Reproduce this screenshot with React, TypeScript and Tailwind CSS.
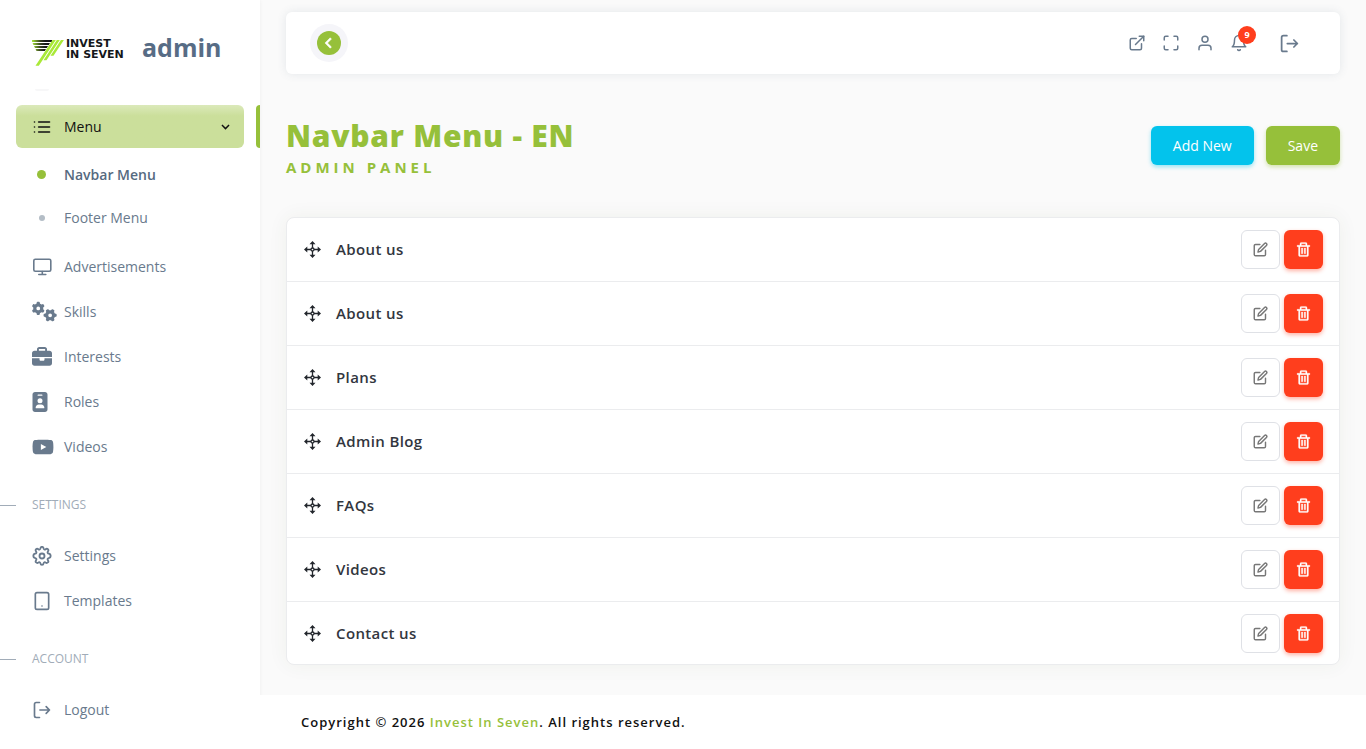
import React, { useState } from 'react';
import { FiBell, FiEdit, FiExternalLink, FiList, FiMaximize, FiTablet, FiUser } from 'react-icons/fi';
import { FaBriefcase, FaGears, FaIdBadge, FaYoutube } from 'react-icons/fa6';
import { BiChevronDown, BiChevronLeft, BiTrash } from 'react-icons/bi';

type MenuItem = { id: number; title: string };

const initialItems: MenuItem[] = [
  { id: 1, title: 'About us' },
  { id: 2, title: 'About us' },
  { id: 3, title: 'Plans' },
  { id: 4, title: 'Admin Blog' },
  { id: 5, title: 'FAQs' },
  { id: 6, title: 'Videos' },
  { id: 7, title: 'Contact us' },
];

function LogoutIcon({ size = 21 }: { size?: number }) {
  return (
    <svg width={size} height={size} viewBox="0 0 24 24" fill="none" stroke="currentColor" strokeWidth="2" strokeLinecap="round" strokeLinejoin="round">
      <path d="M9 21H5a2 2 0 0 1-2-2V5a2 2 0 0 1 2-2h4" />
      <path d="M17 8l4 4-4 4M9.500 12H21" />
    </svg>
  );
}

function MonitorIcon() {
  return (
    <svg width="20" height="20" viewBox="0 0 20 20" fill="none" stroke="currentColor" strokeWidth="1.600" strokeLinecap="round">
      <rect x="1.800" y="2.200" width="17" height="12" rx="1.500" />
      <path d="M10.300 14.500v2.500M6.800 17.500h7" />
    </svg>
  );
}

function GearIcon() {
  return (
    <svg width="20" height="20" viewBox="0 0 24 24" fill="none" stroke="currentColor" strokeWidth="2.200" strokeLinejoin="round">
      <path d="M10.100 2.900c.3-2.500 3.500-2.500 3.800 0 .2 1.300 1.400 1.800 2.400 1 2.100-1.600 4.300.6 2.800 2.700-.8 1.100-.3 2.300 1 2.500 3 .4 3 5 0 5.400-1.300.2-1.800 1.400-1 2.500 1.500 2.100-.7 4.300-2.800 2.800-1-.8-2.200-.3-2.400 1-.3 2.500-3.500 2.500-3.800 0-.2-1.300-1.400-1.800-2.400-1-2.100 1.500-4.300-.7-2.800-2.800.8-1.100.3-2.300-1-2.500-3-.4-3-5 0-5.400 1.300-.2 1.800-1.400 1-2.500-1.500-2.100.7-4.300 2.800-2.700 1 .8 2.200.3 2.400-1z" />
      <circle cx="12" cy="12" r="3" />
    </svg>
  );
}

function MoveIcon() {
  return (
    <svg width="17" height="17" viewBox="0 0 17 17" fill="none" stroke="currentColor" strokeWidth="1.300">
      <circle cx="8.500" cy="8.500" r="1.500" />
      <path d="M8.500 2v5M8.500 10v5M2 8.500h5M10 8.500h5" />
      <path d="M8.500 0l3 3.300h-6zM8.500 17l3-3.300h-6zM0 8.500l3.300-3v6zM17 8.500l-3.300-3v6z" fill="currentColor" stroke="none" />
    </svg>
  );
}

function Logo() {
  return (
    <a href="#" className="flex items-center">
      <svg width="32" height="26" viewBox="0 0 32 26" className="mt-3">
        <defs>
          <linearGradient id="stripe" x1="0" x2="22" y1="0" y2="0" gradientUnits="userSpaceOnUse">
            <stop offset="0" stopColor="#a9e938" />
            <stop offset="0.350" stopColor="#3c4a22" />
            <stop offset="0.600" stopColor="#15181a" />
          </linearGradient>
        </defs>
        <path d="M0 0h20v2H0zM.5 3h17.500l-1.200 2H1.500zM2 6h14l-1.200 2H3zM3.500 9h10.500l-1.200 2H4.500z" fill="url(#stripe)" />
        <path d="M20.500 0h3.300L6.800 25.800H3.500zM24.800 0h3L14.500 20.200h-3zM28.900 0h3L21.500 15.800h-3z" fill="#a9e938" />
      </svg>
      <span className="mt-1 ml-0.5 w-[68px] font-['DejaVu_Sans'] text-[11px] font-bold whitespace-nowrap text-[#14171a]">
        <span className="block leading-[11px]">INVEST</span>
        <span className="block leading-[11px]">IN SEVEN</span>
      </span>
      <span className="ml-2 text-[25px] leading-8 font-bold text-[#576c85]">admin</span>
    </a>
  );
}

function SideLink({ icon, label }: { icon: React.ReactNode; label: string }) {
  return (
    <a href="#" className="flex h-[45px] items-center pl-8 text-[#697a8d]">
      <span className="flex w-8 items-center">{icon}</span>
      {label}
    </a>
  );
}

function SideHeading({ label }: { label: string }) {
  return (
    <div className="flex h-16 items-center gap-4 pt-2 text-[12px] text-[#a1acb8]">
      <span className="h-px w-4 bg-[#a1acb8]" />
      {label}
    </div>
  );
}

export default function App() {
  const [items, setItems] = useState(initialItems);
  const [open, setOpen] = useState(true);

  const addItem = () => setItems([...items, { id: Date.now(), title: 'New item' }]);
  const removeItem = (id: number) => setItems(items.filter((item) => item.id !== id));

  return (
    <div className="flex min-h-screen bg-[#fafafa] font-['Open_Sans','Noto_Sans',sans-serif] text-[14px]">
      {/* Sidebar */}
      <aside className="w-[260px] shrink-0 bg-white shadow-[0_0_4px_rgba(0,0,0,0.05)]">
        <div className="h-[89px] pt-7 pl-8">
          <Logo />
        </div>
        <div className="ml-[35px] h-0.5 w-3.5 rounded-b-sm bg-[#f7f7f8]" />

        <nav className="pt-3.5">
          <div className="mb-[5px] flex justify-between">
            <button
              onClick={() => setOpen(!open)}
              className="ml-4 flex h-[43px] w-[228px] items-center rounded-md bg-[#cbdf9b] bg-linear-to-b from-[#dbe9ba] to-[#cbdf9b] to-25% px-4 text-[#111]"
            >
              <span className="w-8">
                <FiList size={20} strokeWidth={2} />
              </span>
              Menu
              <BiChevronDown size={17} className="-mr-1.5 ml-auto" />
            </button>
            <span className="w-1 rounded-l-sm bg-[#96c03a]" />
          </div>

          {open && (
            <div className="mb-[5px]">
              <a href="#" className="flex h-[43px] items-center font-semibold text-[#566a7f]">
                <span className="ml-[37px] mr-[18px] size-[9px] rounded-full bg-[#96c03a]" />
                Navbar Menu
              </a>
              <a href="#" className="flex h-[43px] items-center text-[#697a8d]">
                <span className="ml-[39px] mr-[19px] size-1.5 rounded-full bg-[#b4bdc6]" />
                Footer Menu
              </a>
            </div>
          )}

          <SideLink icon={<MonitorIcon />} label="Advertisements" />
          <SideLink icon={<FaGears size={25} className="shrink-0" />} label="Skills" />
          <SideLink icon={<FaBriefcase size={20} />} label="Interests" />
          <SideLink icon={<FaIdBadge size={20} className="-ml-0.5" />} label="Roles" />
          <SideLink icon={<FaYoutube size={22} />} label="Videos" />

          <SideHeading label="SETTINGS" />
          <SideLink icon={<GearIcon />} label="Settings" />
          <SideLink icon={<FiTablet size={20} strokeWidth={2} />} label="Templates" />

          <SideHeading label="ACCOUNT" />
          <SideLink icon={<LogoutIcon size={20} />} label="Logout" />
        </nav>
      </aside>

      <div className="flex min-w-0 grow flex-col">
        <main className="grow px-[26px] pt-3 pb-[30px]">
          {/* Top bar */}
          <header className="flex h-[62px] items-center justify-between rounded-md bg-white px-6 shadow-[0_0_10px_rgba(67,89,113,0.12)]">
            <button aria-label="Back" className="flex size-[38px] items-center justify-center rounded-full bg-[#f5f5f9]">
              <span className="flex size-6 items-center justify-center rounded-full bg-[#96c03a] text-white">
                <BiChevronLeft size={22} stroke="currentColor" strokeWidth={0.5} />
              </span>
            </button>
            <div className="flex items-center gap-4 pr-4 text-[#697a8d]">
              <a href="#" aria-label="Open site">
                <FiExternalLink size={18} strokeWidth={2} />
              </a>
              <button aria-label="Fullscreen">
                <FiMaximize size={18} strokeWidth={2} />
              </button>
              <button aria-label="Profile">
                <FiUser size={18} strokeWidth={2} />
              </button>
              <button aria-label="Notifications" className="relative">
                <FiBell size={18} strokeWidth={2} />
                <span className="absolute -top-2 left-2 flex size-[18px] items-center justify-center rounded-full bg-[#ff3e1d] text-[9px] font-bold text-white">
                  9
                </span>
              </button>
              <button aria-label="Log out" className="ml-[15px]">
                <LogoutIcon />
              </button>
            </div>
          </header>

          {/* Page heading */}
          <div className="mt-11 flex items-start justify-between">
            <div className="text-[#96c03a]">
              <h1 className="text-[30px] leading-9 font-extrabold tracking-wide">Navbar Menu - EN</h1>
              <p className="mt-[3px] text-[15px] leading-5 font-bold tracking-[4px]">ADMIN PANEL</p>
            </div>
            <div className="mt-2 flex gap-3 text-white">
              <button onClick={addItem} className="h-[39px] rounded-md bg-[#03c3ec] px-[22px] shadow-[0_2px_4px_rgba(3,195,236,0.4)]">
                Add New
              </button>
              <button className="h-[39px] rounded-md bg-[#96c03a] px-[22px] shadow-[0_2px_4px_rgba(150,192,58,0.4)]">Save</button>
            </div>
          </div>

          <ul className="mt-10 rounded-lg border border-[#ebecee] bg-white shadow-[0_0_20px_rgba(76,87,40,0.06)]">
            {items.map((item) => (
              <li key={item.id} className="flex h-16 items-center border-b border-[#ebecee] pr-4 pl-[17px] last:h-[62px] last:border-b-0">
                <span className="cursor-move text-[#22262c]">
                  <MoveIcon />
                </span>
                <span className="ml-[15px] text-[15px] font-semibold tracking-wide text-[#32363e]">{item.title}</span>
                <div className="ml-auto flex gap-1">
                  <button aria-label="Edit" className="flex size-[39px] items-center justify-center rounded-md border border-[#dfe1e6] text-[#777]">
                    <FiEdit size={15} strokeWidth={2.3} />
                  </button>
                  <button
                    aria-label="Delete"
                    onClick={() => removeItem(item.id)}
                    className="flex size-[39px] items-center justify-center rounded-md bg-[#ff3e1d] text-white shadow-[0_2px_4px_rgba(255,62,29,0.4)]"
                  >
                    <BiTrash size={17} stroke="currentColor" strokeWidth={0.4} />
                  </button>
                </div>
              </li>
            ))}
          </ul>
        </main>

        <footer className="h-[54px] bg-white px-[41px] text-[13px] leading-[54px] font-semibold tracking-[1px] text-[#111]">
          Copyright © 2026{' '}
          <a href="#" className="text-[#96c03a]">
            Invest In Seven
          </a>
          . All rights reserved.
        </footer>
      </div>
    </div>
  );
}
